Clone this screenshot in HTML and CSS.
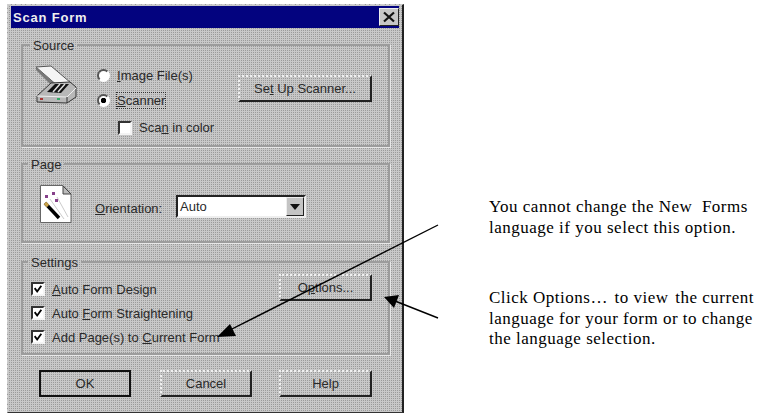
FILE: index.html
```html
<!DOCTYPE html>
<html lang="en">
<head>
<meta charset="utf-8">
<title>Scan Form</title>
<link rel="stylesheet" href="styles.css">
</head>
<body>
<div class="page">
  <div class="dialog">
    <div class="titlebar">
      <span class="title">Scan Form</span>
      <span class="close"><svg width="14" height="12" viewBox="0 0 14 12"><path d="M2 1.5L12 10.5M12 1.5L2 10.5" stroke="#111" stroke-width="2.2" fill="none"/></svg></span>
    </div>
    <fieldset class="group source">
      <legend>Source</legend>
      <svg class="scanner" width="42" height="40" viewBox="0 0 42 40">
        <path d="M1 2L16 1L36 18L24 22Z" fill="#f4f4f4" stroke="#555"/>
        <path d="M1 2L1 5L20 24L24 22Z" fill="#777"/>
        <path d="M16 18L35 17L41 22L41 32L32 38L2 37L2 31Z" fill="#b8b8b8" stroke="#333"/>
        <path d="M2 31L32 32L41 23" fill="none" stroke="#f0f0f0"/>
        <path d="M12 27L20 19L34 19L26 28Z" fill="#111"/>
        <path d="M18 27L25 19M23 27L30 19" stroke="#ddd" stroke-width="1.5"/>
        <path d="M32 32L32 38" stroke="#333"/>
        <rect x="5" y="33" width="3" height="2" fill="#a33"/>
        <rect x="22" y="33" width="3" height="2" fill="#3a6"/>
      </svg>
      <div class="choices">
        <label class="radio-row"><span class="radio"></span><span class="lbl"><u>I</u>mage File(s)</span></label>
        <label class="radio-row"><span class="radio on"></span><span class="lbl focus"><u>S</u>canner</span></label>
        <label class="check-row color"><span class="check"></span><span class="lbl">Sca<u>n</u> in color</span></label>
      </div>
      <button class="btn setup" type="button">Se<u>t</u> Up Scanner...</button>
    </fieldset>
    <fieldset class="group pagegroup">
      <legend>Page</legend>
      <svg class="wand" width="32" height="38" viewBox="0 0 32 38">
        <path d="M0.5 0.5H23L31 9V37.5H0.5Z" fill="#fff" stroke="#666"/>
        <path d="M23 1V9H31Z" fill="#bbb" stroke="#444"/>
        <path d="M10 14L24 34M17 12L28 32" stroke="#ccc" fill="none"/>
        <path d="M5 18L19 33" stroke="#000" stroke-width="3.4"/>
        <path d="M5 18L8 21" stroke="#c9a24a" stroke-width="3.4"/>
        <rect x="12" y="7" width="3" height="3" fill="#86408a"/>
        <rect x="5" y="10" width="3" height="3" fill="#86408a"/>
        <rect x="15" y="14" width="3" height="3" fill="#86408a"/>
      </svg>
      <span class="lbl orient"><u>O</u>rientation:</span>
      <div class="combo">
        <span class="combo-value">Auto</span>
        <span class="combo-arrow"><svg width="10" height="6" viewBox="0 0 10 6"><path d="M0 0H10L5 6Z" fill="#111"/></svg></span>
      </div>
    </fieldset>
    <fieldset class="group settings">
      <legend>Settings</legend>
      <div class="checks">
        <label class="check-row"><span class="check ticked"><svg width="12" height="12" viewBox="0 0 12 12"><path d="M2 5L5 9L10 2" stroke="#000" stroke-width="2.2" fill="none"/></svg></span><span class="lbl"><u>A</u>uto Form Design</span></label>
        <label class="check-row"><span class="check ticked"><svg width="12" height="12" viewBox="0 0 12 12"><path d="M2 5L5 9L10 2" stroke="#000" stroke-width="2.2" fill="none"/></svg></span><span class="lbl">Auto <u>F</u>orm Straightening</span></label>
        <label class="check-row"><span class="check ticked"><svg width="12" height="12" viewBox="0 0 12 12"><path d="M2 5L5 9L10 2" stroke="#000" stroke-width="2.2" fill="none"/></svg></span><span class="lbl">Add Page(s) to <u>C</u>urrent Form</span></label>
      </div>
      <button class="btn options" type="button">O<u>p</u>tions...</button>
    </fieldset>
    <div class="footer">
      <button class="btn default" type="button">OK</button>
      <button class="btn" type="button">Cancel</button>
      <button class="btn" type="button">Help</button>
    </div>
  </div>
  <div class="notes">
    <p class="note first">You cannot change the New&nbsp; Forms<br>language if you select this option.</p>
    <p class="note second">Click Options… &#8202;to view &#8202;the current<br>language for your form or to change<br>the language selection.</p>
  </div>
  <svg class="arrows" width="758" height="414" viewBox="0 0 758 414">
    <path d="M438 225L226 332" stroke="#000" stroke-width="1.4" fill="none"/>
    <path d="M217 337L230 324L236 336Z" fill="#000"/>
    <path d="M438 318L395 301" stroke="#000" stroke-width="1.4" fill="none"/>
    <path d="M384 297L399 295L394 308Z" fill="#000"/>
  </svg>
</div>
</body>
</html>
```
FILE: styles.css
```css
html, body {
  margin: 0;
  padding: 0;
  background: #fff;
}
.page {
  position: relative;
  width: 758px;
  height: 414px;
  overflow: hidden;
  display: flex;
  align-items: flex-start;
}
.dialog {
  box-sizing: border-box;
  flex: none;
  width: 397px;
  height: 409px;
  margin: 4px 0 0 7px;
  padding: 2px 3px 0 3px;
  border-top: 1px dashed #d0d0d0;
  border-left: 1px dashed #d0d0d0;
  border-right: 2px solid #222;
  border-bottom: 1px solid #333;
  background-color: #9a9a9a;
  background-image:
    linear-gradient(90deg, #c8c8c8 50%, transparent 50%),
    linear-gradient(#c8c8c8 50%, transparent 50%);
  background-size: 2px 2px;
  font: 13px "Liberation Sans", Arial, sans-serif;
  color: #2a2a2a;
}
.titlebar {
  height: 22px;
  margin-top: -1px;
  background: #03037f;
  display: flex;
  align-items: center;
  justify-content: space-between;
}
.title {
  margin-left: 2px;
  color: #eee;
  font-weight: bold;
  font-size: 13px;
  letter-spacing: 0.8px;
}
.close {
  box-sizing: border-box;
  width: 20px;
  height: 18px;
  background: #c6c6c6;
  border: 1px solid;
  border-color: #eee #222 #222 #eee;
  display: flex;
  align-items: center;
  justify-content: center;
}
.group {
  box-sizing: border-box;
  width: 369px;
  margin: 0 0 0 10px;
  padding: 0;
  border: 2px solid #9c9c9c;
  box-shadow: 1px 1px 0 #e8e8e8;
  display: flex;
  align-items: flex-start;
}
.group legend {
  margin-left: 5px;
  padding: 2px 3px 0;
  font-size: 13px;
  line-height: 14px;
}
.source legend {
  margin-left: 7px;
}
.source {
  height: 110px;
  margin-top: 9px;
}
.pagegroup {
  height: 87px;
  margin-top: 9px;
}
.settings {
  height: 101px;
  margin-top: 11px;
}
.scanner {
  flex: none;
  margin: 12px 0 0 12px;
}
.choices {
  margin: 15px 0 0 20px;
  width: 121px;
  flex: none;
}
.radio-row, .check-row {
  display: flex;
  align-items: center;
}
.radio-row {
  height: 14px;
  margin-bottom: 9px;
}
.radio-row + .radio-row {
  margin-top: 1px;
  padding-top: 2px;
}
.radio {
  flex: none;
  box-sizing: border-box;
  width: 13px;
  height: 13px;
  margin-right: 7px;
  border-radius: 50%;
  border: 2px solid;
  border-color: #555 #fff #fff #555;
  background: #fff;
}
.radio.on {
  background: radial-gradient(circle, #000 0 2.5px, #fff 3px);
}
.lbl {
  white-space: nowrap;
  line-height: 15px;
}
.focus {
  outline: 1px dotted #333;
}
.color {
  margin: 13px 0 0 21px;
}
.check {
  flex: none;
  box-sizing: border-box;
  width: 14px;
  height: 14px;
  margin-right: 7px;
  border: 2px solid;
  border-color: #333 #f4f4f4 #f4f4f4 #333;
  background: #fff;
  display: flex;
  align-items: center;
  justify-content: center;
}
.btn {
  box-sizing: border-box;
  flex: none;
  width: 92px;
  height: 27px;
  padding: 0;
  font: inherit;
  color: inherit;
  background: transparent;
  border: 2px solid;
  border-color: #f0f0f0 #222 #222 #f0f0f0;
  border-top-style: dotted;
  border-left-style: dotted;
}
.setup {
  width: 134px;
  margin: 22px 0 0 20px;
}
.wand {
  flex: none;
  margin: 13px 0 0 17px;
}
.orient {
  margin: 29px 0 0 23px;
  width: 81px;
  flex: none;
}
.combo {
  box-sizing: border-box;
  flex: none;
  width: 130px;
  height: 23px;
  margin-top: 23px;
  background: #fff;
  border: 2px solid;
  border-color: #222 #eee #eee #222;
  display: flex;
  align-items: center;
  justify-content: space-between;
}
.combo-value {
  margin-left: 2px;
}
.combo-arrow {
  box-sizing: border-box;
  width: 18px;
  height: 19px;
  background: #c4c4c4;
  border: 1px solid;
  border-color: #eee #222 #222 #eee;
  display: flex;
  align-items: center;
  justify-content: center;
}
.checks {
  flex: none;
  margin: 12px 0 0 8px;
  width: 248px;
}
.checks .check-row {
  height: 14px;
  margin-bottom: 10px;
}
.checks .check {
  margin-right: 7px;
}
.options {
  width: 93px;
  margin-top: 4px;
}
.footer {
  display: flex;
  gap: 29px;
  margin: 15px 0 0 28px;
}
.footer .btn:nth-child(3) {
  width: 93px;
  margin-left: -2px;
}
.default {
  border: 2px solid #111;
}
.notes {
  flex: none;
  margin-left: 85px;
  font: 17px/20.5px "Liberation Serif", "Times New Roman", serif;
  color: #000;
}
.note {
  margin: 0;
  white-space: nowrap;
  letter-spacing: 0.5px;
}
.first {
  margin-top: 197px;
}
.second {
  margin-top: 50px;
}
.arrows {
  position: absolute;
  left: 0;
  top: 0;
  pointer-events: none;
}
```
